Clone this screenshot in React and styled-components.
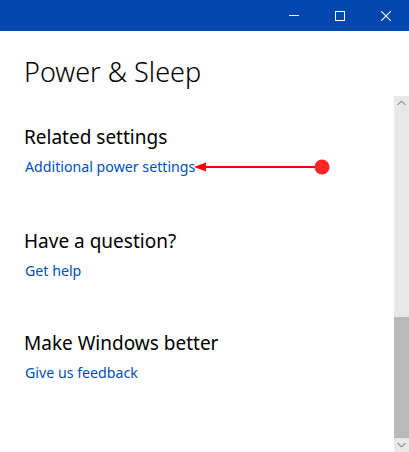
import React from "react";
import styled, { createGlobalStyle } from "styled-components";

const Global = createGlobalStyle`
  html, body {
    margin: 0;
    padding: 0;
    background: #fff;
  }
  body {
    font-family: "Noto Sans", "Open Sans", sans-serif;
    overflow: hidden;
  }
`;

const Window = styled.div`
  width: 409px;
  height: 452px;
  display: flex;
  flex-direction: column;
  background: #fff;
`;

const TitleBar = styled.div`
  height: 31px;
  background: #0047ad;
  display: flex;
  justify-content: flex-end;
  flex-shrink: 0;
`;

const CaptionButton = styled.div`
  width: 46px;
  height: 31px;
  display: flex;
  align-items: center;
  justify-content: center;
`;

const Body = styled.div`
  flex: 1;
  display: flex;
  min-height: 0;
`;

const Content = styled.div`
  flex: 1;
  padding: 0 0 0 24px;
`;

const PageTitle = styled.h1`
  margin: 23px 0 0;
  font-size: 27px;
  font-weight: 300;
  color: #000;
  line-height: 36px;
`;

const Section = styled.section`
  margin-top: ${p => p.$top}px;
`;

const Heading = styled.h2`
  margin: 0;
  font-size: 19px;
  font-weight: 400;
  color: #000;
  line-height: 26px;
`;

const Link = styled.a`
  display: inline-block;
  margin-top: 7px;
  font-size: 14.2px;
  color: #0050b8;
  text-decoration: none;
  line-height: 20px;
  padding-left: 1px;
`;

const LinkRow = styled.div`
  display: flex;
  align-items: center;
`;

const Arrow = styled.svg`
  display: block;
  margin-top: 7px;
  margin-left: -2px;
`;

const Scrollbar = styled.div`
  width: 15px;
  margin-top: 65px;
  background: #e8e8e8;
  display: flex;
  flex-direction: column;
  flex-shrink: 0;
`;

const ScrollArrow = styled.div`
  height: 14px;
  display: flex;
  align-items: center;
  justify-content: center;
  flex-shrink: 0;
`;

const Track = styled.div`
  flex: 1;
  display: flex;
  flex-direction: column;
  justify-content: flex-end;
`;

const Thumb = styled.div`
  height: 121px;
  background: #b9b9b9;
`;

export default function App() {
  return (
    <Window>
      <Global />
      <TitleBar>
        <CaptionButton>
          <svg width="10" height="10" viewBox="0 0 10 10">
            <rect x="0" y="4" width="10" height="1" fill="#fff" />
          </svg>
        </CaptionButton>
        <CaptionButton>
          <svg width="10" height="10" viewBox="0 0 10 10">
            <rect x="0.5" y="0.5" width="9" height="9" fill="none" stroke="#fff" strokeWidth="1" />
          </svg>
        </CaptionButton>
        <CaptionButton>
          <svg width="10" height="10" viewBox="0 0 10 10">
            <path d="M0 0 L10 10 M10 0 L0 10" stroke="#fff" strokeWidth="1.1" />
          </svg>
        </CaptionButton>
      </TitleBar>
      <Body>
        <Content>
          <PageTitle>Power &amp; Sleep</PageTitle>
          <Section $top={34}>
            <Heading>Related settings</Heading>
            <LinkRow>
              <Link href="#">Additional power settings</Link>
              <Arrow width="140" height="18" viewBox="0 0 140 18">
                <line x1="10" y1="9" x2="128" y2="9" stroke="#f00" strokeWidth="2.2" />
                <polygon points="1,9 13,4.5 13,13.5" fill="#f00" />
                <circle cx="129" cy="9" r="7.5" fill="#ff2323" />
              </Arrow>
            </LinkRow>
          </Section>
          <Section $top={51}>
            <Heading>Have a question?</Heading>
            <Link href="#">Get help</Link>
          </Section>
          <Section $top={49}>
            <Heading>Make Windows better</Heading>
            <Link href="#">Give us feedback</Link>
          </Section>
        </Content>
        <Scrollbar>
          <ScrollArrow>
            <svg width="9" height="6" viewBox="0 0 9 6">
              <path d="M0.5 5 L4.5 1 L8.5 5" fill="none" stroke="#606060" strokeWidth="1" />
            </svg>
          </ScrollArrow>
          <Track>
            <Thumb />
          </Track>
          <ScrollArrow>
            <svg width="9" height="6" viewBox="0 0 9 6">
              <path d="M0.5 1 L4.5 5 L8.5 1" fill="none" stroke="#606060" strokeWidth="1" />
            </svg>
          </ScrollArrow>
        </Scrollbar>
      </Body>
    </Window>
  );
}
